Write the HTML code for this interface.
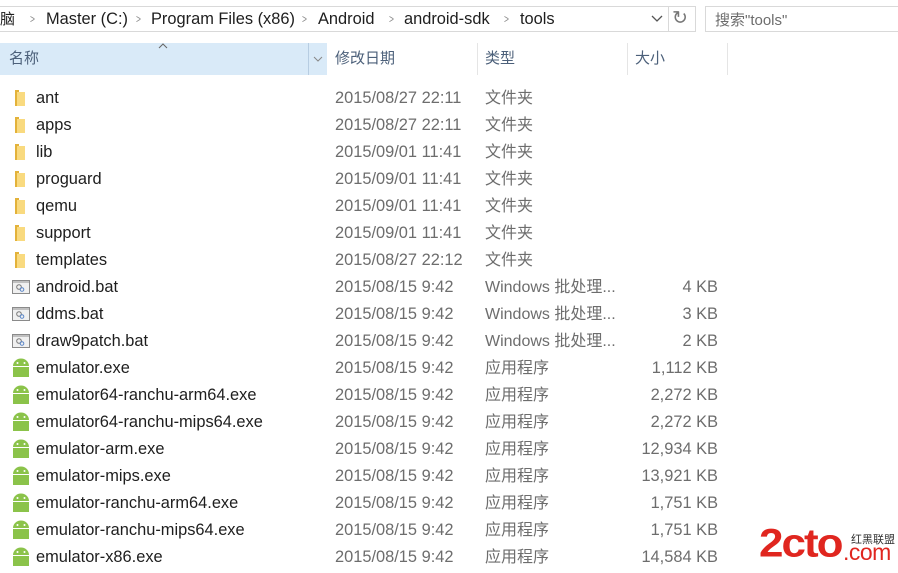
<!DOCTYPE html>
<html><head><meta charset="utf-8">
<style>
body{margin:0;width:898px;height:573px;background:#fff;overflow:hidden;position:relative;font-family:"Liberation Sans","Noto Sans CJK SC",sans-serif;font-size:16.4px;color:#1e1e1e}
.abs{position:absolute;white-space:nowrap}
.addr{position:absolute;left:-2px;top:6px;width:697px;height:24px;border:1px solid #d9d9d9;border-left:none}
.bc{position:absolute;top:10px;white-space:nowrap}
.sep{position:absolute;top:12px;font-size:12px;color:#888;transform:scaleX(0.7)}
.search{position:absolute;left:705px;top:6px;width:200px;height:24px;border:1px solid #d9d9d9;color:#6d6d6d}
.hdr{position:absolute;top:43px;height:32px;line-height:32px;color:#4c607a;font-size:15px}
.row{position:absolute;left:0;width:898px;height:27px;line-height:27px}
.row span{position:absolute}
.d{left:335px;color:#6d6d6d}
.t{left:485px;color:#6d6d6d;font-size:16px}
.s{right:180px;color:#6d6d6d}
.n{left:36px}
.ic{position:absolute;left:12px;top:5px}
</style></head><body>
<div class="addr"></div>
<span class="bc" style="left:0;top:8px;font-size:15px">脑</span>
<span class="sep" style="left:29px">&gt;</span>
<span class="bc" style="left:46px">Master (C:)</span>
<span class="sep" style="left:135px">&gt;</span>
<span class="bc" style="left:151px">Program Files (x86)</span>
<span class="sep" style="left:301px">&gt;</span>
<span class="bc" style="left:318px">Android</span>
<span class="sep" style="left:388px">&gt;</span>
<span class="bc" style="left:404px">android-sdk</span>
<span class="sep" style="left:503px">&gt;</span>
<span class="bc" style="left:520px">tools</span>
<svg class="abs" style="left:651px;top:15px" width="12" height="8"><path d="M1 1 L6 6 L11 1" fill="none" stroke="#555" stroke-width="1.3"/></svg>
<div class="abs" style="left:668px;top:7px;width:1px;height:24px;background:#d9d9d9"></div>
<div class="abs" style="left:672px;top:7px;font-size:19px;color:#777;">↻</div>
<div class="search"><span style="position:absolute;left:9px;top:2px;font-size:15px">搜索"tools"</span></div>

<div class="hdr" style="left:0;width:327px;background:#d9eaf8;"><span style="position:absolute;left:9px">名称</span></div>
<svg class="abs" style="left:158px;top:43px" width="10" height="6"><path d="M1 5 L5 1 L9 5" fill="none" stroke="#666"/></svg>
<div class="hdr" style="left:308px;width:1px;background:#b7cde2"></div>
<svg class="abs" style="left:313px;top:56px" width="10" height="6"><path d="M1 1 L5 5 L9 1" fill="none" stroke="#888"/></svg>
<div class="hdr" style="left:335px">修改日期</div>
<div class="abs" style="left:477px;top:43px;width:1px;height:32px;background:#e5e5e5"></div>
<div class="hdr" style="left:485px">类型</div>
<div class="abs" style="left:627px;top:43px;width:1px;height:32px;background:#e5e5e5"></div>
<div class="hdr" style="left:635px">大小</div>
<div class="abs" style="left:727px;top:43px;width:1px;height:32px;background:#e5e5e5"></div>

<svg width="0" height="0" style="position:absolute"><defs>
<symbol id="fold" viewBox="0 0 16 18"><path d="M3 1 h4 v16 h-4z" fill="#e3b23a"/><path d="M5 3 h8 v14 h-8z" fill="#f9da7f"/></symbol>
<symbol id="bat" viewBox="0 0 18 16"><rect x="0.5" y="1.5" width="17" height="13" fill="#f0f0f0" stroke="#8a8a8a"/><rect x="1" y="2" width="16" height="2" fill="#c0c0c0"/><circle cx="7" cy="8" r="2.3" fill="none" stroke="#777"/><circle cx="10" cy="10.5" r="1.8" fill="none" stroke="#5a86c8"/></symbol>
<symbol id="andr" viewBox="0 0 18 19"><path d="M1 8 a8 7.5 0 0 1 16 0z" fill="#8bc34a"/><rect x="1" y="9" width="16" height="10" fill="#8bc34a"/><circle cx="5.5" cy="5" r="1" fill="#fff"/><circle cx="12.5" cy="5" r="1" fill="#fff"/></symbol>
</defs></svg>

<div class="row" style="top:85px"><svg class="ic" width="16" height="18" style="top:4px"><use href="#fold"/></svg><span class="n">ant</span><span class="d">2015/08/27 22:11</span><span class="t">文件夹</span></div>
<div class="row" style="top:112px"><svg class="ic" width="16" height="18" style="top:4px"><use href="#fold"/></svg><span class="n">apps</span><span class="d">2015/08/27 22:11</span><span class="t">文件夹</span></div>
<div class="row" style="top:139px"><svg class="ic" width="16" height="18" style="top:4px"><use href="#fold"/></svg><span class="n">lib</span><span class="d">2015/09/01 11:41</span><span class="t">文件夹</span></div>
<div class="row" style="top:166px"><svg class="ic" width="16" height="18" style="top:4px"><use href="#fold"/></svg><span class="n">proguard</span><span class="d">2015/09/01 11:41</span><span class="t">文件夹</span></div>
<div class="row" style="top:193px"><svg class="ic" width="16" height="18" style="top:4px"><use href="#fold"/></svg><span class="n">qemu</span><span class="d">2015/09/01 11:41</span><span class="t">文件夹</span></div>
<div class="row" style="top:220px"><svg class="ic" width="16" height="18" style="top:4px"><use href="#fold"/></svg><span class="n">support</span><span class="d">2015/09/01 11:41</span><span class="t">文件夹</span></div>
<div class="row" style="top:247px"><svg class="ic" width="16" height="18" style="top:4px"><use href="#fold"/></svg><span class="n">templates</span><span class="d">2015/08/27 22:12</span><span class="t">文件夹</span></div>
<div class="row" style="top:274px"><svg class="ic" width="18" height="16"><use href="#bat"/></svg><span class="n">android.bat</span><span class="d">2015/08/15 9:42</span><span class="t">Windows 批处理...</span><span class="s">4 KB</span></div>
<div class="row" style="top:301px"><svg class="ic" width="18" height="16"><use href="#bat"/></svg><span class="n">ddms.bat</span><span class="d">2015/08/15 9:42</span><span class="t">Windows 批处理...</span><span class="s">3 KB</span></div>
<div class="row" style="top:328px"><svg class="ic" width="18" height="16"><use href="#bat"/></svg><span class="n">draw9patch.bat</span><span class="d">2015/08/15 9:42</span><span class="t">Windows 批处理...</span><span class="s">2 KB</span></div>
<div class="row" style="top:355px"><svg class="ic" width="18" height="19" style="top:3px"><use href="#andr"/></svg><span class="n">emulator.exe</span><span class="d">2015/08/15 9:42</span><span class="t">应用程序</span><span class="s">1,112 KB</span></div>
<div class="row" style="top:382px"><svg class="ic" width="18" height="19" style="top:3px"><use href="#andr"/></svg><span class="n">emulator64-ranchu-arm64.exe</span><span class="d">2015/08/15 9:42</span><span class="t">应用程序</span><span class="s">2,272 KB</span></div>
<div class="row" style="top:409px"><svg class="ic" width="18" height="19" style="top:3px"><use href="#andr"/></svg><span class="n">emulator64-ranchu-mips64.exe</span><span class="d">2015/08/15 9:42</span><span class="t">应用程序</span><span class="s">2,272 KB</span></div>
<div class="row" style="top:436px"><svg class="ic" width="18" height="19" style="top:3px"><use href="#andr"/></svg><span class="n">emulator-arm.exe</span><span class="d">2015/08/15 9:42</span><span class="t">应用程序</span><span class="s">12,934 KB</span></div>
<div class="row" style="top:463px"><svg class="ic" width="18" height="19" style="top:3px"><use href="#andr"/></svg><span class="n">emulator-mips.exe</span><span class="d">2015/08/15 9:42</span><span class="t">应用程序</span><span class="s">13,921 KB</span></div>
<div class="row" style="top:490px"><svg class="ic" width="18" height="19" style="top:3px"><use href="#andr"/></svg><span class="n">emulator-ranchu-arm64.exe</span><span class="d">2015/08/15 9:42</span><span class="t">应用程序</span><span class="s">1,751 KB</span></div>
<div class="row" style="top:517px"><svg class="ic" width="18" height="19" style="top:3px"><use href="#andr"/></svg><span class="n">emulator-ranchu-mips64.exe</span><span class="d">2015/08/15 9:42</span><span class="t">应用程序</span><span class="s">1,751 KB</span></div>
<div class="row" style="top:544px"><svg class="ic" width="18" height="19" style="top:3px"><use href="#andr"/></svg><span class="n">emulator-x86.exe</span><span class="d">2015/08/15 9:42</span><span class="t">应用程序</span><span class="s">14,584 KB</span></div>

<div class="abs" style="left:759px;top:524px;font-size:44px;font-weight:bold;color:#e0261f;letter-spacing:-2px;line-height:44px;transform:scaleY(0.9);transform-origin:top left">2cto</div>
<div class="abs" style="left:851px;top:531px;font-size:11px;color:#333">红黑联盟</div>
<div class="abs" style="left:843px;top:541px;font-size:23px;color:#e0261f;line-height:23px;letter-spacing:-0.5px">.com</div>
</body></html>
